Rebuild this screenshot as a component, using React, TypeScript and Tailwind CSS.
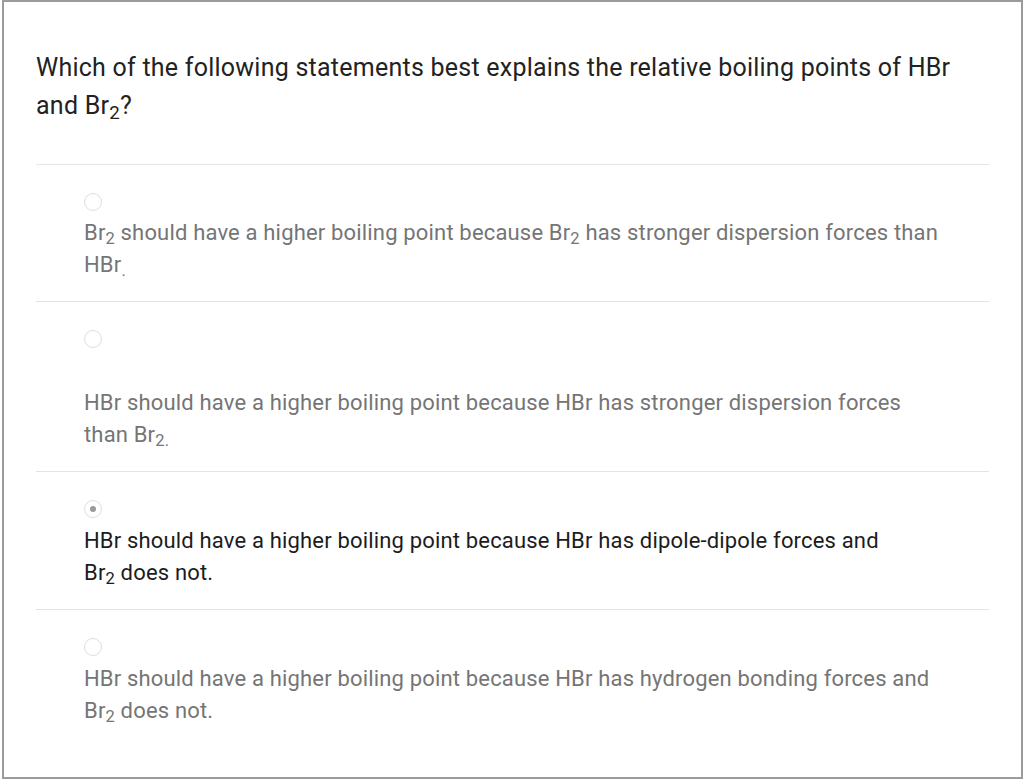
import React from "react";

type Option = {
    id: number;
    text: React.ReactNode;
    selected?: boolean;
    gap: string;
};

const Br2 = () => (
    <>
        Br<sub>2</sub>
    </>
);

const options: Option[] = [
    {
        id: 1,
        gap: "mt-[6px]",
        text: (
            <>
                <Br2 /> should have a higher boiling point because <Br2 /> has stronger dispersion forces than
                <br />
                HBr<sub>.</sub>
            </>
        ),
    },
    {
        id: 2,
        gap: "mt-[39px]",
        text: (
            <>
                HBr should have a higher boiling point because HBr has stronger dispersion forces
                <br />
                than Br<sub>2.</sub>
            </>
        ),
    },
    {
        id: 3,
        gap: "mt-[7px]",
        selected: true,
        text: (
            <>
                HBr should have a higher boiling point because HBr has dipole-dipole forces and
                <br />
                <Br2 /> does not.
            </>
        ),
    },
    {
        id: 4,
        gap: "mt-[7px]",
        text: (
            <>
                HBr should have a higher boiling point because HBr has hydrogen bonding forces and
                <br />
                <Br2 /> does not.
            </>
        ),
    },
];

function Radio({ selected }: { selected?: boolean }) {
    return (
        <div className="w-[18px] h-[18px] rounded-full border border-[#dedede] flex items-center justify-center">
            {selected && <div className="w-[6px] h-[6px] rounded-full bg-[#9a9a9a]"></div>}
        </div>
    );
}

export default function App() {
    return (
        <div className="w-[1024px] h-[782px] bg-white pl-[2px]" style={{ fontFamily: "Roboto, 'Liberation Sans', sans-serif" }}>
            <div className="w-[1021px] h-[779px] border-2 border-[#9b9b9b] pl-[32px] pr-[32px]">
                <p className="pt-[47px] text-[25px] tracking-[0.24px] leading-[38px] text-[#222222] pb-[39px] border-b border-[#e6e6e6] whitespace-nowrap">
                    Which of the following statements best explains the relative boiling points of HBr
                    <br />
                    and <Br2 />?
                </p>
                {options.map((o, i) => (
                    <div
                        key={o.id}
                        className={
                            "pl-[48px] pt-[28px] " +
                            (i < options.length - 1 ? "pb-[20px] border-b border-[#e3e3e3]" : "")
                        }
                    >
                        <Radio selected={o.selected} />
                        <p
                            className={
                                o.gap +
                                " text-[22px] tracking-[0.17px] leading-[32px] whitespace-nowrap " +
                                (o.selected ? "text-[#1c1c1c]" : "text-[#757575]")
                            }
                        >
                            {o.text}
                        </p>
                    </div>
                ))}
            </div>
        </div>
    );
}
